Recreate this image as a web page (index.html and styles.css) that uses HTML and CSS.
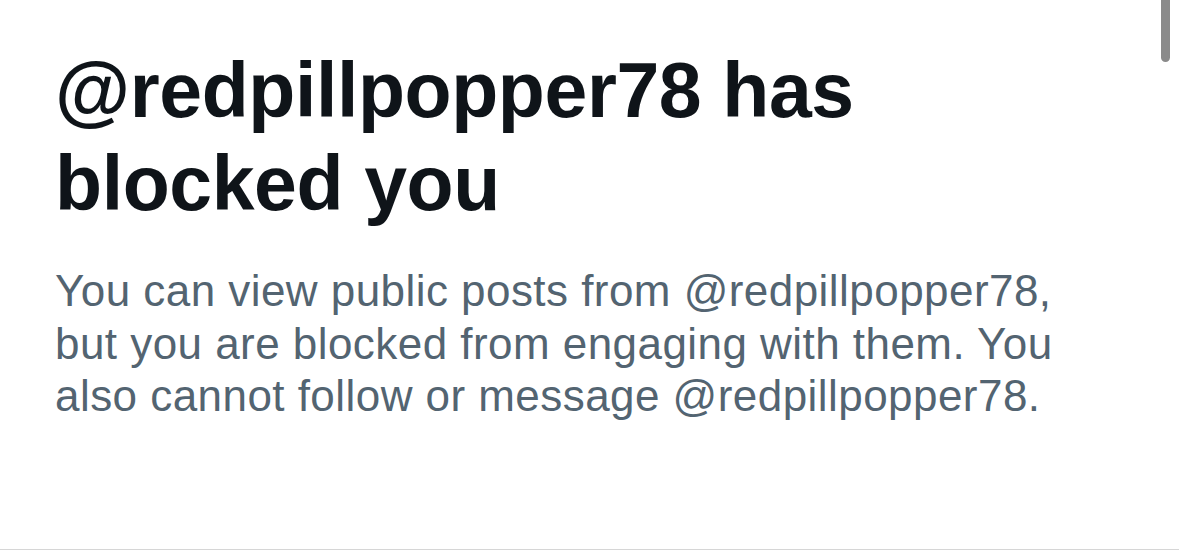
FILE: index.html
```html
<!DOCTYPE html>
<html lang="en">

<head>
  <meta charset="UTF-8">
  <meta name="viewport" content="width=device-width, initial-scale=1.0">
  <title>Blocked</title>
  <link rel="stylesheet" href="styles.css">
</head>

<body>
  <div class="page">
    <div class="blocked">
      <h1 class="blocked-title">@redpillpopper78 has blocked you</h1>
      <p class="blocked-text">You can view public posts from @redpillpopper78, but you are blocked from engaging with them. You also cannot follow or message @redpillpopper78.</p>
    </div>
    <span class="scroll-thumb"></span>
  </div>
</body>

</html>
```

FILE: styles.css
```css
* {
  padding: 0;
  margin: 0;
  box-sizing: border-box;
}

body {
  background: #fff;
  font-family: "Liberation Sans", Arial, sans-serif;
}

.page {
  position: relative;
  height: 550px;
  border-bottom: 1px solid #d6d6d6;
  padding: 44px 0 0 55px;
}

.blocked {
  width: 1020px;
}

.blocked-title {
  font-size: 77px;
  line-height: 93px;
  font-weight: 700;
  letter-spacing: -0.4px;
  color: #0f1419;
  width: 830px;
}

.blocked-text {
  margin-top: 35px;
  font-size: 44px;
  line-height: 52.5px;
  letter-spacing: 0.45px;
  color: #536471;
}

/* scrollbar thumb on top of the page */
.scroll-thumb {
  position: absolute;
  top: -10px;
  left: 1161px;
  width: 9px;
  height: 72px;
  border-radius: 5px;
  background-color: #8a8a8a;
}
```
